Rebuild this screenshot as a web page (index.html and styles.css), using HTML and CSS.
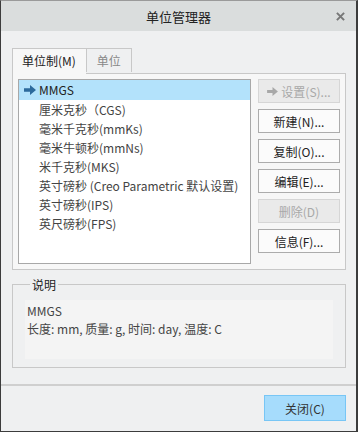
FILE: index.html
```html
<html lang="zh">
<head>
    <meta charset="UTF-8">
    <title>单位管理器</title>
    <link rel="stylesheet" href="styles.css">
</head>
<body>
    <div class="window">
        <div class="titlebar">
            <span class="title">单位管理器</span>
            <svg class="close" width="9" height="9" viewBox="0 0 10 10">
                <path d="M1 1 L9 9 M9 1 L1 9" stroke="#777" stroke-width="2.2"/>
            </svg>
        </div>

        <div class="content">
            <div class="tabs">
                <div class="tab active">单位制(M)</div>
                <div class="tab">单位</div>
            </div>
            <div class="panel">
                <div class="list">
                    <div class="row selected">
                        <svg class="arrow" width="12" height="10" viewBox="0 0 12 10">
                            <path d="M0 3.2 H6 V0 L12 5 L6 10 V6.8 H0 Z" fill="#2c6a9c"/>
                        </svg>
                        MMGS
                    </div>
                    <div class="row">厘米克秒（CGS)</div>
                    <div class="row">毫米千克秒(mmKs)</div>
                    <div class="row">毫米牛顿秒(mmNs)</div>
                    <div class="row">米千克秒(MKS)</div>
                    <div class="row">英寸磅秒 (Creo Parametric 默认设置)</div>
                    <div class="row">英寸磅秒(IPS)</div>
                    <div class="row">英尺磅秒(FPS)</div>
                </div>
                <div class="buttons">
                    <div class="btn disabled">
                        <svg width="11" height="9" viewBox="0 0 12 10">
                            <path d="M0 3.2 H6 V0 L12 5 L6 10 V6.8 H0 Z" fill="#a8a8a8"/>
                        </svg>
                        设置(S)...
                    </div>
                    <div class="btn">新建(N)...</div>
                    <div class="btn">复制(O)...</div>
                    <div class="btn">编辑(E)...</div>
                    <div class="btn disabled">删除(D)</div>
                    <div class="btn">信息(F)...</div>
                </div>
            </div>

            <div class="group">
                <span class="legend">说明</span>
                <div class="desc">
                    <div>MMGS</div>
                    <div>长度: mm, 质量: g, 时间: day, 温度: C</div>
                </div>
            </div>
        </div>

        <div class="footer">
            <div class="btn primary">关闭(C)</div>
        </div>
    </div>
</body>
</html>
```

FILE: styles.css
```css
body{
    margin: 0;
    font-family: "Noto Sans CJK SC", "Noto Sans", sans-serif;
    font-size: 12px;
    color: #333;
}
.window{
    width: 358px;
    height: 432px;
    box-sizing: border-box;
    border: 1px solid #3c3c3c;
    border-top-color: #9a9a9a;
    border-right-width: 2px;
    background: #eff0f1;
    display: flex;
    flex-direction: column;
}
.titlebar{
    height: 30px;
    background: #dadddd;
    display: flex;
    align-items: center;
    justify-content: center;
    position: relative;
}
.titlebar .title{
    font-size: 13px;
    color: #222;
}
.titlebar .close{
    position: absolute;
    right: 11px;
    top: 11px;
}
.content{
    padding: 17px 10px 0 11px;
}
.tabs{
    display: flex;
    height: 25px;
}
.tab{
    height: 24px;
    line-height: 24px;
    padding: 0 10px;
    border: 1px solid #c8c8c8;
    border-bottom: none;
    box-sizing: border-box;
    color: #888;
    background: #eff0f1;
}
.tab.active{
    height: 26px;
    margin-bottom: -1px;
    color: #222;
    background: #f7f7f7;
    padding: 0 10px 0 9px;
    position: relative;
    z-index: 1;
    border-right: none;
}
.panel{
    border: 1px solid #c8c8c8;
    background: #f7f7f7;
    padding: 5px;
    display: flex;
    gap: 7px;
}
.list{
    width: 234px;
    height: 185px;
    box-sizing: border-box;
    border: 1px solid #a8a8a8;
    background: #fff;
}
.row{
    height: 19px;
    line-height: 19px;
    padding-left: 20px;
    white-space: nowrap;
    overflow: hidden;
    position: relative;
    color: #444;
}
.row.selected{
    background: #b3e2fb;
    color: #222;
    height: 20px;
    line-height: 20px;
}
.row .arrow{
    position: absolute;
    left: 5px;
    top: 5px;
}
.buttons{
    display: flex;
    flex-direction: column;
    gap: 6px;
}
.btn{
    width: 82px;
    height: 24px;
    box-sizing: border-box;
    border: 1px solid #acacac;
    background: #fbfbfb;
    display: flex;
    align-items: center;
    justify-content: center;
    gap: 3px;
    color: #222;
}
.btn.disabled{
    background: #eaeaea;
    border-color: #d6d6d6;
    color: #a8a8a8;
}
.group{
    margin-top: 14px;
    height: 84px;
    box-sizing: border-box;
    border: 1px solid #c8c8c8;
    padding: 15px 12px 0 12px;
    position: relative;
}
.legend{
    position: absolute;
    top: -9px;
    left: 17px;
    padding: 0 2px;
    background: #eff0f1;
    color: #222;
}
.desc{
    height: 55px;
    background: #f4f4f4;
    padding: 2px;
    line-height: 18px;
    color: #444;
}
.footer{
    margin-top: 16px;
    border-top: 2px solid #cfcfcf;
    display: flex;
    justify-content: flex-end;
    padding: 9px 10px 0 0;
}
.btn.primary{
    background: #a6dcfc;
    border-color: #78c6f5;
    height: 26px;
    color: #333;
}
```
